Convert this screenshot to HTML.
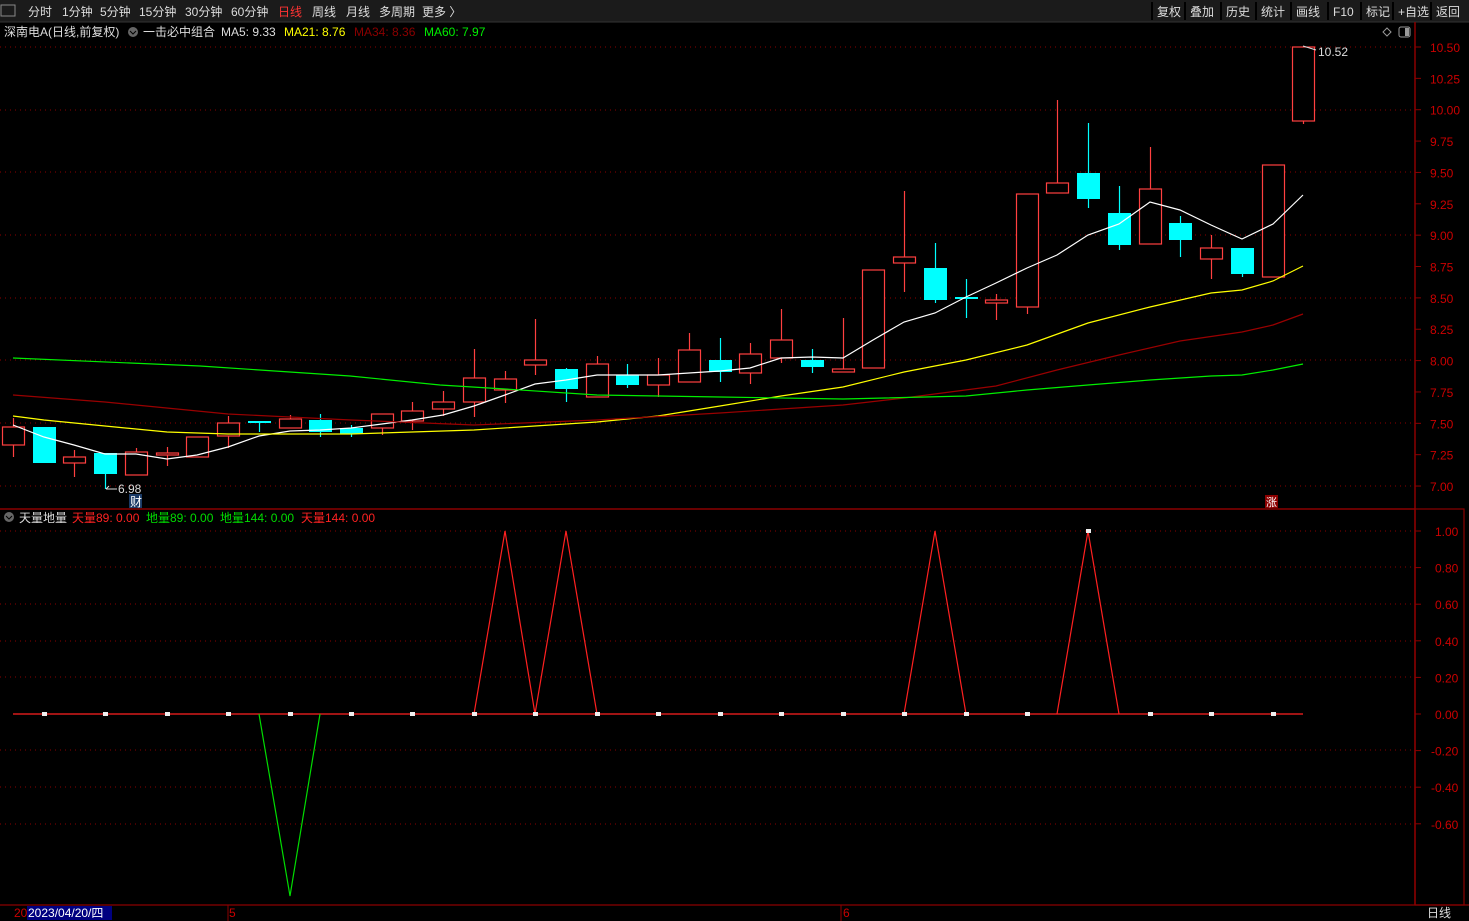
<!DOCTYPE html>
<html><head><meta charset="utf-8"><style>
body{margin:0;background:#000;width:1469px;height:921px;overflow:hidden;font-family:"Liberation Sans","Noto Sans CJK SC",sans-serif;}
svg{position:absolute;left:0;top:0}
</style></head><body>
<svg id="s" width="1469" height="921" xmlns="http://www.w3.org/2000/svg" font-family="Liberation Sans, Noto Sans CJK SC, sans-serif">
<rect x="0" y="0" width="1469" height="22" fill="#1b1b1b"/>
<rect x="1" y="5" width="14" height="11" fill="none" stroke="#888" stroke-width="1"/>
<g font-size="12" fill="#ddd">
<text x="28" y="16">分时</text><text x="62" y="16">1分钟</text><text x="100" y="16">5分钟</text><text x="139" y="16">15分钟</text><text x="185" y="16">30分钟</text><text x="231" y="16">60分钟</text><text x="278" y="16" fill="#ff3333">日线</text><text x="312" y="16">周线</text><text x="346" y="16">月线</text><text x="379" y="16">多周期</text><text x="422" y="16">更多 〉</text>
</g>
<g id="btns" font-size="12" fill="#ddd"></g>
<line x1="0" y1="22" x2="1469" y2="22" stroke="#333"/>
<g font-size="12">
<text x="4" y="36" fill="#ddd">深南电A(日线,前复权)</text>
<circle cx="133" cy="32" r="5" fill="#666"/><path d="M130 31 L133 34 L136 31" stroke="#000" fill="none"/>
<text x="143" y="36" fill="#ddd">一击必中组合</text>
<text x="221" y="36" fill="#ddd">MA5: 9.33</text>
<text x="284" y="36" fill="#ffff00">MA21: 8.76</text>
<text x="354" y="36" fill="#8b0000">MA34: 8.36</text>
<text x="424" y="36" fill="#00ee00">MA60: 7.97</text>
<path d="M1387 28 L1391 32 L1387 36 L1383 32 Z" fill="none" stroke="#999"/>
<rect x="1399" y="27" width="11" height="10" rx="2" fill="none" stroke="#999"/><rect x="1405" y="28" width="4" height="8" fill="#999"/>
</g>
<g id="grid"></g>
<g id="c"></g>
<g id="ma" fill="none" stroke-width="1.2"></g>
<g id="ind"></g>
<line x1="0" y1="509" x2="1415" y2="509" stroke="#8b0000" stroke-width="1.5"/>
<line x1="1415" y1="22" x2="1415" y2="905" stroke="#8b0000" stroke-width="1.5"/>
<rect x="1415" y="509" width="49" height="396" fill="none" stroke="#8b0000" stroke-width="1.2"/>
<line x1="0" y1="905" x2="1469" y2="905" stroke="#8b0000" stroke-width="1.2"/>
<g font-size="12">
<circle cx="9" cy="517" r="5" fill="#666"/><path d="M6 516 L9 519 L12 516" stroke="#000" fill="none"/>
<text x="19" y="522" fill="#ddd">天量地量</text>
<text x="72" y="522" fill="#ff2222">天量89: 0.00</text>
<text x="146" y="522" fill="#00dd00">地量89: 0.00</text>
<text x="220" y="522" fill="#00dd00">地量144: 0.00</text>
<text x="301" y="522" fill="#ff2222">天量144: 0.00</text>
<text x="118" y="493" fill="#ddd">6.98</text>
<path d="M106 489 L117 489 M106 489 L109 486" stroke="#ddd" fill="none"/>
<rect x="129" y="494" width="13" height="14" fill="#1a3a66"/><text x="130" y="506" fill="#fff">财</text>
<rect x="1265" y="495" width="13" height="13" fill="#8b0000"/><text x="1266" y="506" fill="#fff" font-size="11">涨</text>
<text x="1318" y="56" fill="#ddd">10.52</text>
<path d="M1303 46 L1316 50" stroke="#ddd"/>
<text x="14" y="917" fill="#cc0000">20</text>
<rect x="27" y="906" width="85" height="14" fill="#000080"/>
<text x="28" y="917" fill="#fff">2023/04/20/四</text>
<line x1="228" y1="905" x2="228" y2="921" stroke="#8b0000"/><text x="229" y="917" fill="#cc0000">5</text>
<line x1="841" y1="905" x2="841" y2="921" stroke="#8b0000"/><text x="843" y="917" fill="#cc0000">6</text>
<text x="1427" y="917" fill="#ddd">日线</text>
</g>
<g id="ax" font-size="12" fill="#cc0000"></g>
</svg>
<script>
var NS="http://www.w3.org/2000/svg";
function el(p,t,a,txt){var e=document.createElementNS(NS,t);for(var k in a)e.setAttribute(k,a[k]);if(txt!=null)e.textContent=txt;document.getElementById(p).appendChild(e);return e;}
var b=[["复权",1157],["叠加",1190],["历史",1226],["统计",1261],["画线",1296],["F10",1333],["标记",1366],["+自选",1398],["返回",1436]];
el("btns","rect",{x:1152,y:0,width:317,height:21,fill:"#1b1b1b"});
b.forEach(function(x,i){el("btns","text",{x:x[1],y:16},x[0]);el("btns","line",{x1:x[1]-5,y1:2,x2:x[1]-5,y2:20,stroke:"#000","stroke-width":2});});
[47,110,172,235,298,360,423,486].forEach(function(y){el("grid","line",{x1:0,y1:y,x2:1415,y2:y,stroke:"#8b0000","stroke-dasharray":"1 4"});});
[531,567,604,641,677,750,787,824].forEach(function(y){el("grid","line",{x1:0,y1:y,x2:1415,y2:y,stroke:"#8b0000","stroke-dasharray":"1 4"});});
var labs=["10.50","10.25","10.00","9.75","9.50","9.25","9.00","8.75","8.50","8.25","8.00","7.75","7.50","7.25","7.00"];
labs.forEach(function(t,i){var y=47+i*31.36;el("ax","text",{x:1430,y:y+5},t);el("ax","line",{x1:1415,y1:y,x2:1421,y2:y,stroke:"#8b0000"});});
["1.00","0.80","0.60","0.40","0.20","0.00","-0.20","-0.40","-0.60"].forEach(function(t,i){var y=531+i*36.6;el("ax","text",{x:t[0]=="-"?1431:1435,y:y+5},t);el("ax","line",{x1:1415,y1:y,x2:1421,y2:y,stroke:"#8b0000"});});
function pl(pts,c){el("ma","polyline",{points:pts.map(function(p){return p.join(",")}).join(" "),stroke:c});}
var C=[[13,1,418,427,445,457],[44,0,427,427,463,463],[74,1,450,457,463,477],[105,0,453,453,474,489],[136,1,448,452,475,475],[167,1,447,453,455,466],[197,1,437,437,457,457],[228,1,416,423,436,448],[259,0,421,421,423,432],[290,1,415,419,428,428],[320,0,414,420,432,437],[351,0,425,428,434,437],[382,1,414,414,428,435],[412,1,402,411,421,430],[443,1,391,402,409,416],[474,1,349,378,402,417],[505,1,371,379,390,403],[535,1,319,360,365,375],[566,0,368,369,389,402],[597,1,356,364,397,397],[627,0,364,375,385,388],[658,1,358,375,385,397],[689,1,333,350,382,382],[720,0,338,360,372,382],[750,1,343,354,373,384],[781,1,309,340,358,363],[812,0,349,360,367,373],[843,1,318,369,372,372],[873,1,270,270,368,368],[904,1,191,257,263,292],[935,0,243,268,300,303],[966,0,279,297,299,318],[996,1,294,300,303,320],[1027,1,194,194,307,314],[1057,1,100,183,193,193],[1088,0,123,173,199,208],[1119,0,186,213,245,250],[1150,1,147,189,244,244],[1180,0,216,223,240,257],[1211,1,235,248,259,279],[1242,0,248,248,274,277],[1273,1,165,165,277,277],[1303,1,47,47,121,124]];
C.forEach(function(c){var x=c[0],col=c[1]?"#ff4040":"#00ffff";
 el("c","line",{x1:x+.5,y1:c[2],x2:x+.5,y2:c[5],stroke:col,"stroke-width":1.2});
 var h=Math.max(c[4]-c[3],1.5);
 if(c[1]) el("c","rect",{x:x-10.5,y:c[3],width:22,height:h,fill:"#000",stroke:col,"stroke-width":1.2});
 else el("c","rect",{x:x-11,y:c[3],width:23,height:h,fill:col});
});
pl([[13,425],[44,437],[74,445],[105,454],[136,454],[167,459],[197,455],[228,447],[259,436],[290,431],[320,430],[351,428],[382,424],[412,420],[443,415],[474,406],[505,395],[535,384],[566,380],[597,375],[627,375],[658,375],[689,373],[720,371],[750,368],[781,358],[812,357],[843,358],[873,340],[904,322],[935,313],[966,297],[996,283],[1027,268],[1057,255],[1088,235],[1119,224],[1150,202],[1180,210],[1211,225],[1242,239],[1273,224],[1303,195]],"#fff");
pl([[13,416],[44,420],[105,426],[167,432],[228,434],[290,434],[351,434],[412,432],[474,430],[535,426],[597,422],[658,416],[720,406],[781,396],[843,387],[904,372],[966,360],[1027,345],[1088,323],[1150,307],[1211,293],[1242,290],[1273,281],[1303,266]],"#ffff00");
pl([[13,395],[105,402],[228,414],[351,420],[474,425],[597,420],[720,413],[781,409],[843,405],[904,398],[996,386],[1057,370],[1119,355],[1180,341],[1242,332],[1273,325],[1303,314]],"#990000");
pl([[13,358],[200,366],[350,376],[440,385],[505,389],[597,395],[720,397],[843,399],[966,396],[1027,390],[1088,385],[1150,380],[1211,376],[1242,375],[1273,370],[1303,364]],"#00ee00");
el("ind","line",{x1:13,y1:714,x2:1303,y2:714,stroke:"#ff2020","stroke-width":1.2});
[[474,505,535],[535,566,597],[904,935,966],[1057,1088,1119]].forEach(function(p){el("ind","polyline",{points:p[0]+",714 "+p[1]+",531 "+p[2]+",714",fill:"none",stroke:"#ff2020","stroke-width":1.2});});
el("ind","polyline",{points:"259,714 290,896 320,714",fill:"none",stroke:"#00dd00","stroke-width":1.2});
[44,105,167,228,290,351,412,474,535,597,658,720,781,843,904,966,1027,1150,1211,1273].forEach(function(x){el("ind","rect",{x:x-2,y:712,width:5,height:4,fill:"#eee"});});
el("ind","rect",{x:1086,y:529,width:5,height:4,fill:"#eee"});
</script>
</body></html>
